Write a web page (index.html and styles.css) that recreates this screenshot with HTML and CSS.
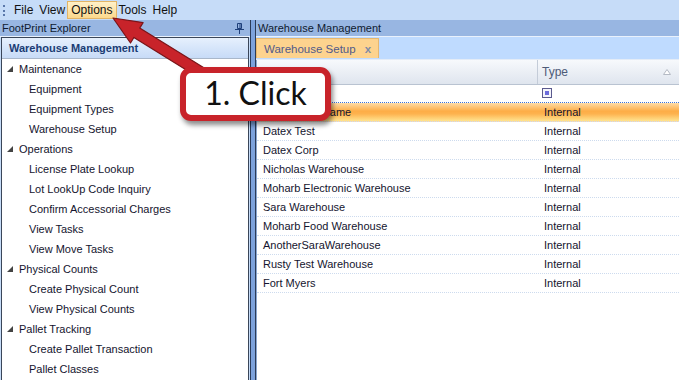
FILE: index.html
```html
<!DOCTYPE html>
<html lang="en">
<head>
    <meta charset="UTF-8">
    <title>FootPrint - Warehouse Management</title>
    <link rel="stylesheet" href="styles.css">
</head>
<body>

<div class="menubar">
    <span class="grip"></span>
    <span class="menu">File</span>
    <span class="menu">View</span>
    <span class="menu active">Options</span>
    <span class="menu">Tools</span>
    <span class="menu">Help</span>
</div>

<div class="main">
    <div class="left">
        <div class="pane-title">
            <span>FootPrint Explorer</span>
            <svg class="pin" width="9" height="11" viewBox="0 0 9 11">
                <path d="M2.5 0.5h4v5h-4z" fill="none" stroke="#1e3f7a"/>
                <path d="M5 1v4" stroke="#1e3f7a"/>
                <path d="M0 6.5h9M4.5 6.5v4.5" stroke="#1e3f7a"/>
            </svg>
        </div>
        <div class="explorer">
            <div class="explorer-head">Warehouse Management</div>
            <ul class="tree">
                <li class="group"><svg width="6" height="6" viewBox="0 0 6 6"><path d="M6 0v6h-6z" fill="#444"/></svg>Maintenance</li>
                <li class="leaf">Equipment</li>
                <li class="leaf">Equipment Types</li>
                <li class="leaf">Warehouse Setup</li>
                <li class="group"><svg width="6" height="6" viewBox="0 0 6 6"><path d="M6 0v6h-6z" fill="#444"/></svg>Operations</li>
                <li class="leaf">License Plate Lookup</li>
                <li class="leaf">Lot LookUp Code Inquiry</li>
                <li class="leaf">Confirm Accessorial Charges</li>
                <li class="leaf">View Tasks</li>
                <li class="leaf">View Move Tasks</li>
                <li class="group"><svg width="6" height="6" viewBox="0 0 6 6"><path d="M6 0v6h-6z" fill="#444"/></svg>Physical Counts</li>
                <li class="leaf">Create Physical Count</li>
                <li class="leaf">View Physical Counts</li>
                <li class="group"><svg width="6" height="6" viewBox="0 0 6 6"><path d="M6 0v6h-6z" fill="#444"/></svg>Pallet Tracking</li>
                <li class="leaf">Create Pallet Transaction</li>
                <li class="leaf">Pallet Classes</li>
            </ul>
        </div>
    </div>

    <div class="splitter"></div>

    <div class="right">
        <div class="pane-title"><span>Warehouse Management</span></div>
        <div class="tabstrip">
            <div class="tab">Warehouse Setup<span class="close">x</span></div>
        </div>
        <div class="grid">
            <div class="grid-head">
                <div class="cell"></div>
                <div class="cell type">Type
                    <svg class="sort" width="8" height="6" viewBox="0 0 8 6"><path d="M4 0.5l3.5 5h-7z" fill="#fff" stroke="#b4bac4"/></svg>
                </div>
            </div>
            <div class="filter-row">
                <div class="cell"></div>
                <div class="cell type"><span class="check"></span></div>
            </div>
            <div class="row sel"><div class="cell">Warehouse Name</div><div class="cell type">Internal</div></div>
            <div class="row"><div class="cell">Datex Test</div><div class="cell type">Internal</div></div>
            <div class="row"><div class="cell">Datex Corp</div><div class="cell type">Internal</div></div>
            <div class="row"><div class="cell">Nicholas Warehouse</div><div class="cell type">Internal</div></div>
            <div class="row"><div class="cell">Moharb Electronic Warehouse</div><div class="cell type">Internal</div></div>
            <div class="row"><div class="cell">Sara Warehouse</div><div class="cell type">Internal</div></div>
            <div class="row"><div class="cell">Moharb Food Warehouse</div><div class="cell type">Internal</div></div>
            <div class="row"><div class="cell">AnotherSaraWarehouse</div><div class="cell type">Internal</div></div>
            <div class="row"><div class="cell">Rusty Test Warehouse</div><div class="cell type">Internal</div></div>
            <div class="row"><div class="cell">Fort Myers</div><div class="cell type">Internal</div></div>
        </div>
    </div>
</div>

<!-- annotation over the screenshot -->
<svg class="arrow" width="679" height="380" viewBox="0 0 679 380">
    <polygon points="113,18 143.1,22.6 139.7,28.1 207.9,70.3 202.1,79.7 133.9,37.5 130.5,43"
             fill="#c8232a" stroke="#7a1418" stroke-width="1.2" stroke-linejoin="round"/>
</svg>
<div class="callout">1. Click</div>

</body>
</html>
```

FILE: styles.css
```css
body {
    margin: 0;
    width: 679px;
    height: 380px;
    overflow: hidden;
    position: relative;
    font-family: "Liberation Sans", Arial, sans-serif;
    font-size: 11px;
    color: #14142e;
    background-color: #c6dcf8;
}
.menubar {
    height: 20px;
    display: flex;
    align-items: center;
    padding-left: 3px;
    background-color: #c6dcf8;
    font-size: 12px;
}
.grip {
    width: 0;
    height: 11px;
    border-left: 2px dotted #5a77aa;
    margin-right: 6px;
}
.menu {
    padding: 1px 2px;
    border: 1px solid transparent;
    color: #111;
}
.menu.active {
    padding: 1px 3px;
    margin: 0 -1px;
    background: linear-gradient(#fff0c8, #fcd88c);
    border-color: #e2b466;
}
.main {
    display: flex;
    height: 360px;
}
.left {
    width: 250px;
    display: flex;
    flex-direction: column;
}
.pane-title {
    height: 16px;
    line-height: 16px;
    padding-left: 2px;
    background-color: #98b6e2;
    border-bottom: 1px solid #e9f1fc;
    color: #0f1a30;
    display: flex;
    align-items: center;
    justify-content: space-between;
}
.pin {
    margin-right: 6px;
}
.explorer {
    flex: 1;
    margin: 0 1px 0 1px;
    border: 1px solid #3a4659;
    border-bottom: none;
    background-color: white;
}
.explorer-head {
    height: 20px;
    line-height: 20px;
    padding-left: 7px;
    background: linear-gradient(#e6f0fd, #c7dbf7);
    border-bottom: 1px solid #a9b7ca;
    font-weight: bold;
    color: #1a3c74;
}
.tree {
    list-style-type: none;
    margin: 0;
    padding: 0;
}
.tree li {
    height: 20px;
    line-height: 20px;
    white-space: nowrap;
}
.group {
    padding-left: 5px;
    display: flex;
    align-items: center;
}
.group svg {
    margin-right: 6px;
}
.leaf {
    padding-left: 27px;
}
.splitter {
    width: 6px;
    box-sizing: border-box;
    background-color: #7da2dc;
    border-left: 1px solid #2b3b58;
    border-right: 1px solid #2b3b58;
}
.right {
    flex: 1;
    display: flex;
    flex-direction: column;
}
.tabstrip {
    height: 21px;
    padding-top: 1px;
    background-color: #bfdbff;
    border-bottom: 1px solid #e4ecf7;
}
.tab {
    display: inline-block;
    height: 20px;
    line-height: 20px;
    box-sizing: border-box;
    padding: 0 7px 0 7px;
    background-color: #fdd38e;
    border: 1px solid #e5b76f;
    border-bottom: none;
    color: #515a8a;
    font-size: 11.5px;
}
.close {
    margin-left: 9px;
    color: #7d8aa6;
    font-weight: bold;
}
.grid {
    flex: 1;
    background-color: white;
    border-left: 1px solid #8ba6cf;
}
.grid-head, .filter-row, .row {
    display: grid;
    grid-template-columns: 280px 1fr;
}
.cell {
    padding-left: 6px;
    white-space: nowrap;
    overflow: hidden;
}
.cell.type {
    padding-left: 7px;
}
.grid-head {
    height: 24px;
    line-height: 24px;
    background: linear-gradient(#f7f9fc, #dfe5ee);
    border-bottom: 1px solid #b9c3d1;
    color: #4d5b78;
    font-size: 12px;
}
.grid-head .type {
    border-left: 1px solid #c4ccd8;
    position: relative;
    padding-left: 4px;
}
.sort {
    position: absolute;
    right: 8px;
    top: 9px;
}
.filter-row {
    height: 17px;
    border-bottom: 1px dotted #3f74d3;
}
.check {
    display: inline-block;
    margin-top: 3px;
    margin-left: -2px;
    width: 4px;
    height: 4px;
    border: 1px solid #5a5a8e;
    padding: 2px;
    background-color: #6b6bdb;
    background-clip: content-box;
    box-shadow: inset 0 0 0 2px #f4f4fb;
}
.row {
    height: 18px;
    line-height: 18px;
    border-bottom: 1px dotted #cddbee;
}
.row.sel {
    background: linear-gradient(#ffdca6, #fdad46 45%, #fdb24e 60%, #ffe38f);
}
.arrow {
    position: absolute;
    left: 0;
    top: 0;
    pointer-events: none;
}
.callout {
    position: absolute;
    left: 180px;
    top: 67px;
    width: 139px;
    height: 42px;
    line-height: 40px;
    border: 6px solid #c8232a;
    border-radius: 11px;
    background-color: white;
    box-shadow: 2px 4px 5px rgba(0, 0, 0, 0.45);
    font-family: Lato, "Open Sans", sans-serif;
    font-size: 32px;
    color: #111;
    text-align: center;
}
```
